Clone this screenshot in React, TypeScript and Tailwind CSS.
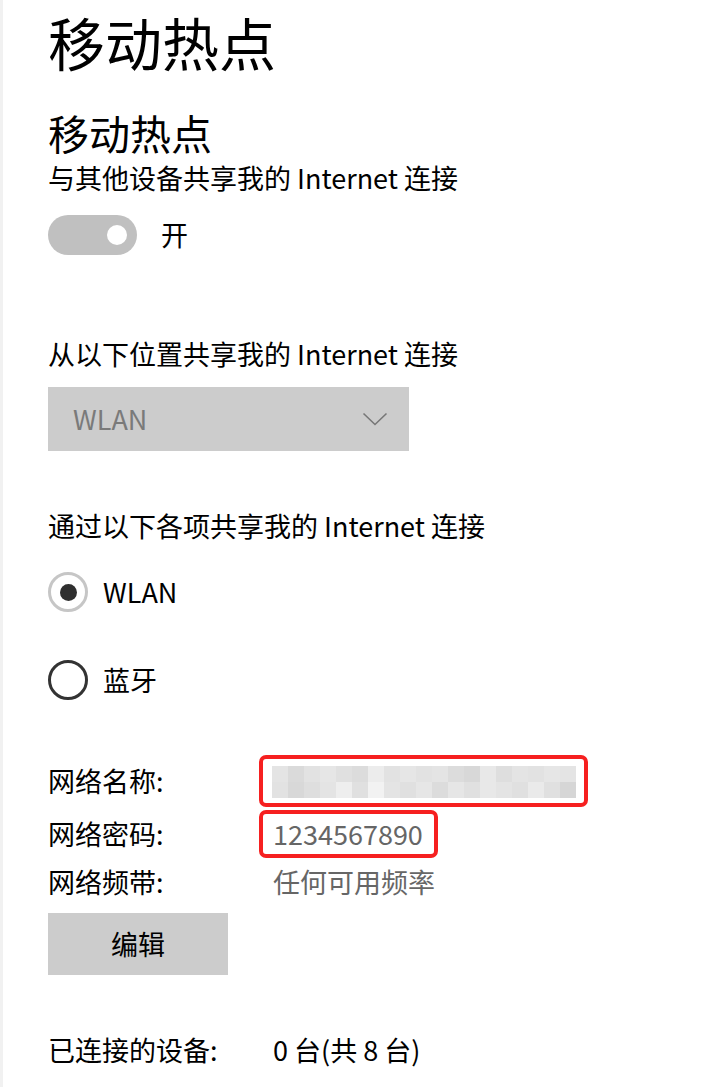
const blur = [
  ['#e4e4e4', '#dadada', '#e2e2e2', '#e6e6e6', '#e0e0e0', '#dcdcdc', '#ececec', '#e2e2e2', '#e6e6e6', '#e2e2e2', '#e4e4e4', '#dcdcdc', '#d8d8d8', '#e8e8e8', '#dedede', '#e4e4e4', '#e2e2e2', '#e6e6e6', '#e4e4e4'],
  ['#e2e2e2', '#d8d8d8', '#dedede', '#e4e4e4', '#eeeeee', '#e0e0e0', '#f2f2f2', '#e4e4e4', '#e0e0e0', '#e6e6e6', '#dcdcdc', '#e6e6e6', '#e0e0e0', '#e8e8e8', '#e4e4e4', '#e0e0e0', '#eaeaea', '#e0e0e0', '#d6d6d6'],
];

function Chevron() {
  return (
    <svg width="26" height="14" viewBox="0 0 26 14" fill="none">
      <path d="M1.5 1.5 L13 12.5 L24.5 1.5" stroke="#777" strokeWidth="1.6" />
    </svg>
  );
}

export default function App() {
  const font = { fontFamily: '"Noto Sans CJK SC", "Noto Sans", sans-serif' };
  return (
    <div style={font} className="min-h-[1087px] w-[723px] overflow-hidden bg-white border-l-[3px] border-[#f1f1f1] pl-[45px] pt-[4px] text-black">
      <h1 className="text-[57px] leading-[74px]">移动热点</h1>
      <h2 className="mt-[30px] text-[41px] leading-[48px]">移动热点</h2>
      <p className="mt-[6px] text-[27px] leading-[32px]">与其他设备共享我的 Internet 连接</p>

      <div className="mt-[21px] flex items-center h-[40px]">
        <div className="w-[89px] h-[40px] rounded-full bg-[#c0c0c0] flex items-center justify-end pr-[10px]">
          <div className="w-[20px] h-[20px] rounded-full bg-white" />
        </div>
        <span className="ml-[24px] text-[27px] leading-[32px]">开</span>
      </div>

      <p className="mt-[83px] text-[27px] leading-[32px]">从以下位置共享我的 Internet 连接</p>
      <div className="mt-[17px] w-[361px] h-[64px] bg-[#cccccc] flex items-center justify-between pl-[25px] pr-[21px]">
        <span className="text-[27px] text-[#7a7a7a]">WLAN</span>
        <Chevron />
      </div>

      <p className="mt-[59px] text-[27px] leading-[32px]">通过以下各项共享我的 Internet 连接</p>
      <div className="mt-[30px] flex items-center h-[40px]">
        <div className="w-[40px] h-[40px] rounded-full border-[3px] border-[#c6c6c6] flex items-center justify-center">
          <div className="w-[17px] h-[17px] rounded-full bg-[#2f2f2f]" />
        </div>
        <span className="ml-[15px] text-[27px]">WLAN</span>
      </div>
      <div className="mt-[48px] flex items-center h-[40px]">
        <div className="w-[40px] h-[40px] rounded-full border-[3px] border-[#333333]" />
        <span className="ml-[15px] text-[27px]">蓝牙</span>
      </div>

      <div className="mt-[55px] text-[27px]">
        <div className="flex items-center h-[52px]">
          <span className="w-[211px] shrink-0">网络名称:</span>
          <div className="w-[329px] h-[52px] border-[4px] border-[#f62020] rounded-[7px] pl-[9px] pt-[7px]">
            {blur.map((row, i) => (
              <div key={i} className="flex">
                {row.map((c, j) => (
                  <div key={j} className="w-[16px] h-[16px]" style={{ background: c }} />
                ))}
              </div>
            ))}
          </div>
        </div>
        <div className="mt-[3px] flex items-center h-[48px]">
          <span className="w-[211px] shrink-0">网络密码:</span>
          <div className="w-[179px] h-[48px] border-[4px] border-[#f62020] rounded-[7px] pl-[10px] flex items-center text-[#666666]">
            1234567890
          </div>
        </div>
        <div className="flex items-center h-[48px]">
          <span className="w-[211px] shrink-0">网络频带:</span>
          <span className="pl-[14px] text-[#666666]">任何可用频率</span>
        </div>
      </div>

      <button className="mt-[7px] w-[180px] h-[62px] bg-[#cccccc] text-[27px] flex items-center justify-center">编辑</button>

      <div className="mt-[59px] flex text-[27px] leading-[32px]">
        <span className="w-[225px] shrink-0">已连接的设备:</span>
        <span>0 台(共 8 台)</span>
      </div>
    </div>
  );
}
